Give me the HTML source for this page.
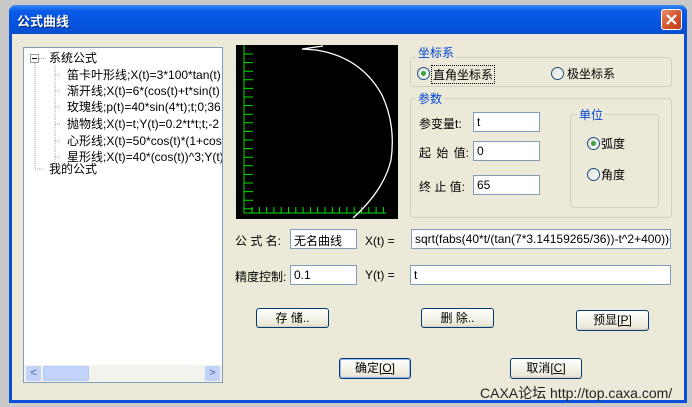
<!DOCTYPE html>
<html><head><meta charset="utf-8"><style>
*{margin:0;padding:0;box-sizing:border-box}
body{width:692px;height:407px;background:#c8c8c8;position:relative;overflow:hidden;font-family:"Liberation Sans","Noto Sans CJK SC",sans-serif;font-size:12px;color:#000}
.a{position:absolute}
.win{left:9px;top:5px;width:678px;height:398px;background:#0a4fd8;border-radius:7px 7px 0 0}
.title{left:9px;top:5px;width:678px;height:29px;border-radius:7px 7px 0 0;background:linear-gradient(#3a8cf5,#0a5ce8 20%,#0554e0 60%,#0a4fd0)}
.client{left:12px;top:34px;width:672px;height:366px;background:#ece9d8}
.tt{left:17px;top:11px;color:#fff;font-weight:bold;font-size:13px;text-shadow:1px 1px #0a2a80}
.close{left:661px;top:9px;width:21px;height:21px;border:1px solid #fff;border-radius:3px;background:linear-gradient(135deg,#e88a6a,#d0502a 60%,#c04020)}
.tree{left:23px;top:47px;width:200px;height:336px;background:#fff;border:1px solid #7f9db9}
.grp{border:1px solid #d0d0bf;border-radius:4px}
.gl{background:#ece9d8;color:#0046d5;padding:0 2px}
.in{background:#fff;border:1px solid #7f9db9;height:20px;padding:2px 3px;font-size:12px;white-space:nowrap;overflow:hidden}
.btn{border:1px solid #003c74;border-radius:3px;background:linear-gradient(#fff,#ece9d8 85%,#d6d0c5);text-align:center;line-height:18px}
.rad{width:13px;height:13px;border-radius:50%;border:1px solid #1c5180;background:linear-gradient(135deg,#dcdcd6,#fff)}
.dot{position:absolute;left:3px;top:3px;width:5px;height:5px;border-radius:50%;background:#3aa53a}
.ti{left:0;white-space:nowrap;font-size:12px;line-height:16px}
</style></head><body>
<div class="a win"></div>
<div class="a title"></div>
<div class="a tt">公式曲线</div>
<div class="a close"><svg width="19" height="19"><path d="M5 5L14 14M14 5L5 14" stroke="#fff" stroke-width="2.2"/></svg></div>
<div class="a client"></div>

<div class="a tree">
 <svg class="a" style="left:0;top:0" width="200" height="330">
  <rect x="6.5" y="6.5" width="8" height="8" fill="#fff" stroke="#919b9c"/>
  <path d="M8 10.5h5" stroke="#000"/>
  <path d="M11 15v106M15 10.5h5M11 121h8M31 17v100M31 27h6M31 43h6M31 59h6M31 76h6M31 93h6M31 109h6" stroke="#a0a0a0" stroke-dasharray="1 1"/>
 </svg>
 <div class="a ti" style="left:25px;top:2px">系统公式</div>
 <div class="a ti" style="left:43px;top:19px;width:155px;overflow:hidden">笛卡叶形线;X(t)=3*100*tan(t)</div>
 <div class="a ti" style="left:43px;top:35px;width:155px;overflow:hidden">渐开线;X(t)=6*(cos(t)+t*sin(t)</div>
 <div class="a ti" style="left:43px;top:51px;width:155px;overflow:hidden">玫瑰线;p(t)=40*sin(4*t);t;0;36</div>
 <div class="a ti" style="left:43px;top:68px;width:155px;overflow:hidden">抛物线;X(t)=t;Y(t)=0.2*t*t;t;-2</div>
 <div class="a ti" style="left:43px;top:85px;width:155px;overflow:hidden">心形线;X(t)=50*cos(t)*(1+cos</div>
 <div class="a ti" style="left:43px;top:101px;width:155px;overflow:hidden">星形线;X(t)=40*(cos(t))^3;Y(t)</div>
 <div class="a ti" style="left:25px;top:113px">我的公式</div>
 <div class="a" style="left:0;top:317px;width:198px;height:17px;background:#f3f3ee">
  <div class="a" style="left:2px;top:1px;width:15px;height:15px;background:#c1d3fb;border-radius:2px;color:#4d6185;font-size:11px;text-align:center;line-height:15px">&lt;</div>
  <div class="a" style="left:19px;top:1px;width:46px;height:15px;background:#c1d3fb;border:1px solid #b4c8f6;border-radius:2px"></div>
  <div class="a" style="left:181px;top:1px;width:15px;height:15px;background:#c1d3fb;border-radius:2px;color:#4d6185;font-size:11px;text-align:center;line-height:15px">&gt;</div>
 </div>
</div>

<svg class="a" style="left:236px;top:45px" width="162" height="174">
 <rect width="162" height="174" fill="#000"/>
 <path d="M8 0V168H150" stroke="#00e000" fill="none"/>
 <path d="M8 9h9M8 17.6h9M8 26.2h9M8 34.8h9M8 43.4h9M8 52h9M8 60.6h9M8 69.2h9M8 77.8h9M8 86.4h9M8 95h9M8 103.6h9M8 112.2h9M8 120.8h9M8 129.4h9M8 138h9M8 146.6h9M8 155.2h9M8 163.8h9" stroke="#00e000"/>
 <path d="M16 168v-6M23.3 168v-6M30.6 168v-6M37.9 168v-6M45.2 168v-6M52.5 168v-6M59.8 168v-6M67.1 168v-6M74.4 168v-6M81.7 168v-6M89 168v-6M96.3 168v-6M103.6 168v-6M110.9 168v-6M118.2 168v-6M125.5 168v-6M132.8 168v-6M140.1 168v-6M147.4 168v-6" stroke="#00e000"/>
 <path d="M87 1L66 4L80 5Q125 12 146 50Q160 80 155 115Q148 145 117 173" stroke="#fff" fill="none" stroke-width="1.3"/>
</svg>

<div class="a grp" style="left:410px;top:57px;width:262px;height:30px"></div>
<div class="a gl" style="left:416px;top:44px">坐标系</div>
<div class="a rad" style="left:417px;top:67px"><div class="dot"></div></div>
<div class="a" style="left:431px;top:65px;border:1px dotted #000;padding:0 1px">直角坐标系</div>
<div class="a rad" style="left:551px;top:67px"></div>
<div class="a" style="left:567px;top:65px">极坐标系</div>

<div class="a grp" style="left:410px;top:98px;width:262px;height:120px"></div>
<div class="a gl" style="left:416px;top:90px">参数</div>
<div class="a" style="left:419px;top:115px">参变量t:</div>
<div class="a in" style="left:473px;top:112px;width:67px">t</div>
<div class="a" style="left:419px;top:144px;word-spacing:2px">起 始 值:</div>
<div class="a in" style="left:473px;top:141px;width:67px">0</div>
<div class="a" style="left:419px;top:178px">终 止 值:</div>
<div class="a in" style="left:473px;top:175px;width:67px">65</div>
<div class="a grp" style="left:570px;top:114px;width:89px;height:94px"></div>
<div class="a gl" style="left:577px;top:106px">单位</div>
<div class="a rad" style="left:587px;top:137px"><div class="dot"></div></div>
<div class="a" style="left:601px;top:135px">弧度</div>
<div class="a rad" style="left:587px;top:168px"></div>
<div class="a" style="left:601px;top:166px">角度</div>

<div class="a" style="left:235px;top:232px">公 式 名:</div>
<div class="a in" style="left:290px;top:229px;width:67px">无名曲线</div>
<div class="a" style="left:365px;top:234px">X(t) =</div>
<div class="a in" style="left:411px;top:229px;width:260px">sqrt(fabs(40*t/(tan(7*3.14159265/36))-t^2+400))+</div>
<div class="a" style="left:235px;top:268px">精度控制:</div>
<div class="a in" style="left:290px;top:265px;width:67px">0.1</div>
<div class="a" style="left:365px;top:268px">Y(t) =</div>
<div class="a in" style="left:410px;top:265px;width:261px">t</div>

<div class="a btn" style="left:256px;top:308px;width:73px;height:20px">存 储..</div>
<div class="a btn" style="left:421px;top:308px;width:73px;height:20px">删 除..</div>
<div class="a btn" style="left:576px;top:310px;width:73px;height:21px">预显<u>[P]</u></div>
<div class="a btn" style="left:339px;top:358px;width:72px;height:21px;border-color:#003c74;box-shadow:inset 0 0 0 1px #9db6f0">确定<u>[O]</u></div>
<div class="a btn" style="left:510px;top:358px;width:72px;height:21px">取消<u>[C]</u></div>
<div class="a" style="left:480px;top:383px;font-size:14px;color:#222">CAXA论坛 http://top.caxa.com/</div>
</body></html>
